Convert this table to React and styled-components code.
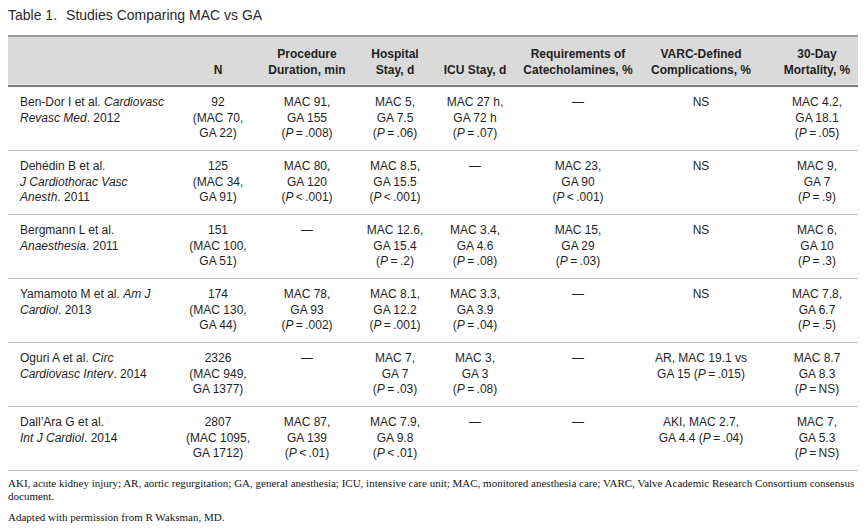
import styled, { createGlobalStyle } from "styled-components";

const GlobalStyle = createGlobalStyle`
  body {
    margin: 0;
    background: #fff;
  }
`;

// column widths, the last column sits a bit right of its track
const COLS = "165px 90px 88px 88px 72px 134px 112px 100px";

const Page = styled.div`
  width: 866px;
  padding: 6px 8px 0 8px;
  box-sizing: border-box;
  font-family: "Liberation Sans", Arial, sans-serif;
  color: #222;
`;

const Title = styled.h1`
  margin: 0 0 11px 0;
  font-size: 14px;
  line-height: 18px;
  font-weight: normal;
  color: #2a2a2a;
  span {
    margin-right: 9px;
  }
`;

const Head = styled.div`
  display: grid;
  grid-template-columns: ${COLS};
  background: #dadada;
  border-top: 2px solid #9a9a9a;
  border-bottom: 2px solid #7c7c7c;
  box-shadow: inset 0 -1px 0 #ececec;
  padding: 9px 0 7px;
`;

const Row = styled.div`
  display: grid;
  grid-template-columns: ${COLS};
  height: 55px;
  padding-top: 8px;
  border-bottom: 1px solid #b9b9b9;
`;

const Cell = styled.div`
  display: flex;
  flex-direction: column;
  align-items: ${(p) => (p.$left ? "flex-start" : "center")};
  justify-content: ${(p) => (p.$head ? "flex-end" : "flex-start")};
  padding-left: ${(p) => p.$shift || 0}px;
  font-size: 12px;
  line-height: ${(p) => (p.$head ? "16px" : "15.5px")};
  font-weight: ${(p) => (p.$head ? "bold" : "normal")};
  white-space: nowrap;
  color: #1f1f1f;
`;

const Notes = styled.div`
  font-family: "Liberation Serif", "Times New Roman", serif;
  font-size: 11px;
  line-height: 12.5px;
  color: #151515;
  padding-top: 6px;
  p {
    margin: 0 0 9px 0;
  }
`;

const P = ({ op, v }) => (
  <span>
    (<i>P</i>&thinsp;{op}&thinsp;{v})
  </span>
);

const heads = [
  [],
  ["N"],
  ["Procedure", "Duration, min"],
  ["Hospital", "Stay, d"],
  ["ICU Stay, d"],
  ["Requirements of", "Catecholamines, %"],
  ["VARC-Defined", "Complications, %"],
  ["30-Day", "Mortality, %"],
];

const rows = [
  [
    [<>Ben-Dor I et al. <i>Cardiovasc</i></>, <><i>Revasc Med</i>. 2012</>],
    ["92", "(MAC 70,", "GA 22)"],
    ["MAC 91,", "GA 155", <P op="=" v=".008" />],
    ["MAC 5,", "GA 7.5", <P op="=" v=".06" />],
    ["MAC 27 h,", "GA 72 h", <P op="=" v=".07" />],
    ["—"],
    ["NS"],
    ["MAC 4.2,", "GA 18.1", <P op="=" v=".05" />],
  ],
  [
    ["Dehédin B et al.", <i>J Cardiothorac Vasc</i>, <><i>Anesth</i>. 2011</>],
    ["125", "(MAC 34,", "GA 91)"],
    ["MAC 80,", "GA 120", <P op="<" v=".001" />],
    ["MAC 8.5,", "GA 15.5", <P op="<" v=".001" />],
    ["—"],
    ["MAC 23,", "GA 90", <P op="<" v=".001" />],
    ["NS"],
    ["MAC 9,", "GA 7", <P op="=" v=".9" />],
  ],
  [
    ["Bergmann L et al.", <><i>Anaesthesia</i>. 2011</>],
    ["151", "(MAC 100,", "GA 51)"],
    ["—"],
    ["MAC 12.6,", "GA 15.4", <P op="=" v=".2" />],
    ["MAC 3.4,", "GA 4.6", <P op="=" v=".08" />],
    ["MAC 15,", "GA 29", <P op="=" v=".03" />],
    ["NS"],
    ["MAC 6,", "GA 10", <P op="=" v=".3" />],
  ],
  [
    [<>Yamamoto M et al. <i>Am J</i></>, <><i>Cardiol</i>. 2013</>],
    ["174", "(MAC 130,", "GA 44)"],
    ["MAC 78,", "GA 93", <P op="=" v=".002" />],
    ["MAC 8.1,", "GA 12.2", <P op="=" v=".001" />],
    ["MAC 3.3,", "GA 3.9", <P op="=" v=".04" />],
    ["—"],
    ["NS"],
    ["MAC 7.8,", "GA 6.7", <P op="=" v=".5" />],
  ],
  [
    [<>Oguri A et al. <i>Circ</i></>, <><i>Cardiovasc Interv</i>. 2014</>],
    ["2326", "(MAC 949,", "GA 1377)"],
    ["—"],
    ["MAC 7,", "GA 7", <P op="=" v=".03" />],
    ["MAC 3,", "GA 3", <P op="=" v=".08" />],
    ["—"],
    ["AR, MAC 19.1 vs", <>GA 15 <P op="=" v=".015" /></>],
    ["MAC 8.7", "GA 8.3", <P op="=" v="NS" />],
  ],
  [
    ["Dall’Ara G et al.", <><i>Int J Cardiol</i>. 2014</>],
    ["2807", "(MAC 1095,", "GA 1712)"],
    ["MAC 87,", "GA 139", <P op="<" v=".01" />],
    ["MAC 7.9,", "GA 9.8", <P op="<" v=".01" />],
    ["—"],
    ["—"],
    ["AKI, MAC 2.7,", <>GA 4.4 <P op="=" v=".04" /></>],
    ["MAC 7,", "GA 5.3", <P op="=" v="NS" />],
  ],
];

function Lines({ items }) {
  return items.map((line, i) => <div key={i}>{line}</div>);
}

export default function App() {
  return (
    <Page>
      <GlobalStyle />
      <Title>
        <span>Table 1.</span>Studies Comparing MAC vs GA
      </Title>

      <Head>
        {heads.map((h, i) => (
          <Cell key={i} $head $shift={i === 7 ? 20 : 0}>
            <Lines items={h} />
          </Cell>
        ))}
      </Head>

      {rows.map((r, ri) => (
        <Row key={ri}>
          {r.map((c, ci) => (
            <Cell key={ci} $left={ci === 0} $shift={ci === 0 ? 12 : ci === 7 ? 20 : 0}>
              <Lines items={c} />
            </Cell>
          ))}
        </Row>
      ))}

      <Notes>
        <p>
          AKI, acute kidney injury; AR, aortic regurgitation; GA, general anesthesia; ICU, intensive care unit; MAC, monitored anesthesia care; VARC, Valve Academic Research Consortium consensus
          <br />
          document.
        </p>
        <p>Adapted with permission from R Waksman, MD.</p>
      </Notes>
    </Page>
  );
}
